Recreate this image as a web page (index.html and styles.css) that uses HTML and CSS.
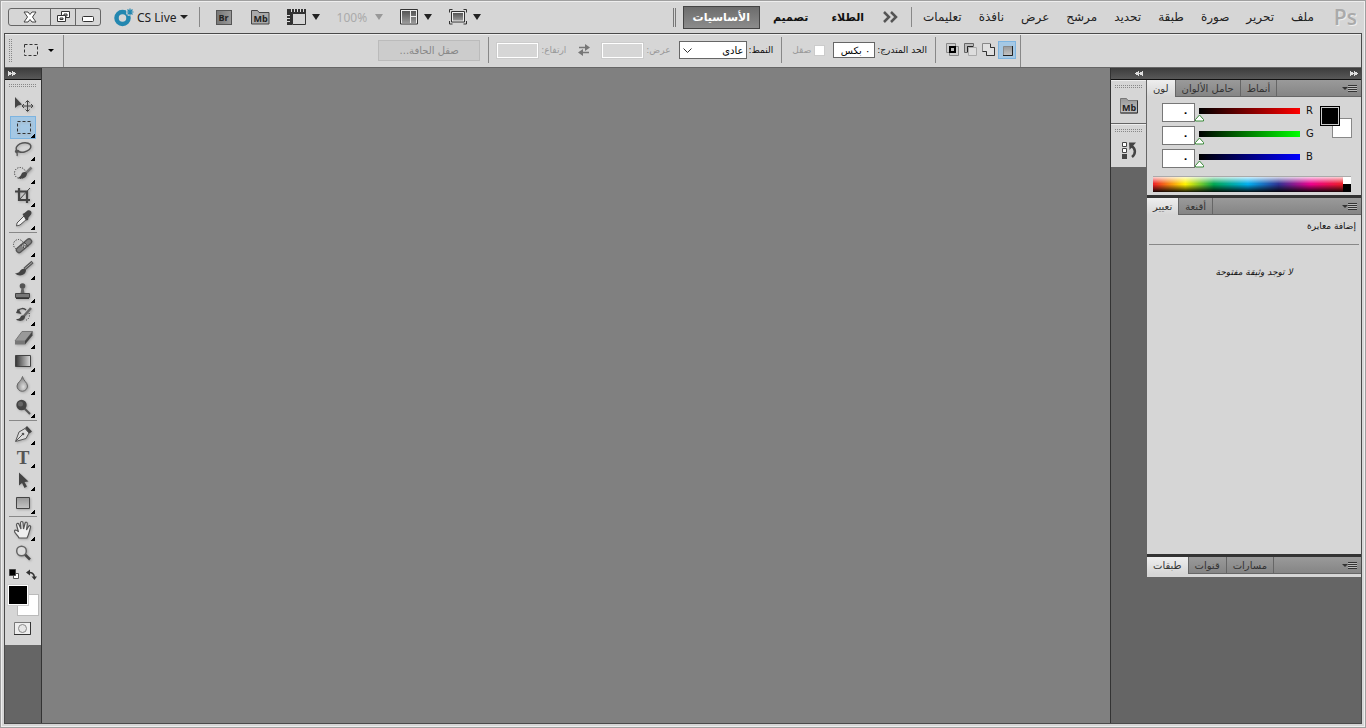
FILE: index.html
```
<!DOCTYPE html>
<html lang="ar">
<head>
    <meta charset="UTF-8" />
    <meta name="viewport" content="width=device-width, initial-scale=1.0" />
    <title>Photoshop</title>
    <link rel="stylesheet" href="styles.css">
</head>
<body>
    <!-- gradients shared by the icons -->
    <svg class="defs" width="0" height="0" aria-hidden="true">
        <defs>
            <linearGradient id="metal" x1="0" y1="0" x2="0" y2="1"><stop offset="0" stop-color="#555" /><stop offset="1" stop-color="#999" /></linearGradient>
            <linearGradient id="silver" x1="0" y1="0" x2="0" y2="1"><stop offset="0" stop-color="#999" /><stop offset="1" stop-color="#c4c4c4" /></linearGradient>
            <linearGradient id="fade" x1="0" y1="0" x2="1" y2="0"><stop offset="0" stop-color="#333" /><stop offset="1" stop-color="#ddd" /></linearGradient>
            <radialGradient id="dropfill" cx="0.6" cy="0.7" r="0.6"><stop offset="0" stop-color="#ddd" /><stop offset="1" stop-color="#888" /></radialGradient>
        </defs>
    </svg>

    <header class="topbar">
        <div class="topleft">
            <div class="winbuttons">
                <button class="close" aria-label="Close"><svg width="14" height="12" viewBox="0 0 14 12"><path d="M1 1h4l2 2.500L9 1h4L9.500 6 13 11H9L7 8.500 5 11H1l3.500-5z" fill="#fff" stroke="#444" /></svg></button>
                <button class="restore" aria-label="Restore"><svg width="13" height="12" viewBox="0 0 13 12"><path d="M4.500.5h8v6h-8z" fill="#fff" stroke="#333" /><path d="M7 3h3v2H7z" fill="#d6d6d6" stroke="#333" /><path d="M.5 4.500h8v6h-8z" fill="#fff" stroke="#333" /><path d="M3 7h3v1.500H3z" fill="#d6d6d6" stroke="#333" /></svg></button>
                <button class="minimize" aria-label="Minimize"><svg width="13" height="12" viewBox="0 0 13 12"><rect x="0.5" y="5.500" width="11" height="5" rx="1" fill="#fff" stroke="#333" /></svg></button>
            </div>
            <button class="cslive">
                <svg width="20" height="19" viewBox="0 0 20 19"><circle cx="8.500" cy="10" r="6" fill="none" stroke="#2387b0" stroke-width="4.500" /><circle cx="16" cy="4" r="4" fill="#d6d6d6" /><path d="M16 .5v7M12.500 4h7M13.500 1.500l5 5M18.500 1.500l-5 5" stroke="#2387b0" stroke-width="1.200" /></svg>
                <span>CS Live</span>
                <i class="caret"></i>
            </button>
            <span class="divider"></span>
            <button class="appbox bridge">Br</button>
            <button class="appbox mini" aria-label="Mini Bridge">
                <svg width="19" height="16" viewBox="0 0 19 16"><path d="M.5 15V1.500h6l1.500 2h10V15z" fill="#aaa" stroke="#444" /><text x="9.500" y="13" text-anchor="middle" class="folder">Mb</text></svg>
            </button>
            <button class="drop film" aria-label="Extras">
                <svg width="19" height="16" viewBox="0 0 19 16"><path d="M0 0h19v5H5v11H0z" fill="#333" /><path d="M5.500 4.500h13v11h-13z" fill="#d6d6d6" stroke="#333" /><path d="M4.500 0v3M7.500 0v3M10.500 0v3M13.500 0v3M16.500 0v3M0 6.500h3M0 9.500h3M0 12.500h3" stroke="#ddd" /></svg>
                <i class="caret"></i>
            </button>
            <button class="drop zoomlevel" disabled><span>100%</span><i class="caret"></i></button>
            <button class="drop" aria-label="Arrange documents">
                <svg width="18" height="16" viewBox="0 0 18 16"><path d="M.5.5h17v14.500H.5z" fill="#eee" stroke="#333" /><path d="M2 2h8v12H2zM11 2h5v5h-5zM11 8h5v6h-5z" fill="url(#metal)" /></svg>
                <i class="caret"></i>
            </button>
            <button class="drop" aria-label="Screen mode">
                <svg width="18" height="16" viewBox="0 0 18 16"><path d="M.5 3.500v-3h3M14.500.5h3v3M17.500 12v3h-3M3.500 15h-3v-3" fill="none" stroke="#333" /><path d="M2.500 2.500h13v10.500h-13z" fill="#eee" stroke="#333" /><path d="M4 4h10v7.500H4z" fill="url(#metal)" /></svg>
                <i class="caret"></i>
            </button>
        </div>

        <div class="topright" dir="rtl">
            <span class="pslogo">Ps</span>
            <nav class="menu">
                <a href="#">ملف</a>
                <a href="#">تحرير</a>
                <a href="#">صورة</a>
                <a href="#">طبقة</a>
                <a href="#">تحديد</a>
                <a href="#">مرشح</a>
                <a href="#">عرض</a>
                <a href="#">نافذة</a>
                <a href="#">تعليمات</a>
            </nav>
            <span class="divider"></span>
            <button class="more" aria-label="More"><svg width="15" height="12" viewBox="0 0 15 12"><path d="M1 1l5 5-5 5M8 1l5 5-5 5" fill="none" stroke="#555" stroke-width="2.500" /></svg></button>
            <button class="space">الطلاء</button>
            <button class="space">تصميم</button>
            <button class="space active">الأساسيات</button>
            <span class="double"></span>
        </div>
    </header>

    <div class="frame">
        <div class="options">
            <div class="optleft">
                <span class="grip-v"></span>
                <button class="current" aria-label="Marquee">
                    <svg width="16" height="14" viewBox="0 0 16 14"><path d="M1.500 1.500h13v11h-13z" fill="none" stroke="#333" stroke-dasharray="3 2" /></svg>
                    <i class="caret small"></i>
                </button>
            </div>
            <div class="optright" dir="rtl">
                <div class="modes">
                    <button class="mode on" aria-label="New"><svg width="18" height="18" viewBox="0 0 18 18"><path d="M5.500 5.500h9v9h-9z" fill="url(#silver)" stroke="#888" /><path d="M5 14.500h9.500V5" fill="none" stroke="#222" /></svg></button>
                    <button class="mode" aria-label="Add"><svg width="18" height="18" viewBox="0 0 18 18"><path d="M2.500 2.500h8v4h4v8h-8v-4h-4z" fill="#e0e0e0" stroke="#888" /><path d="M6.500 14.500h8v-8M2.500 10.500h4v4M10.500 3v3.500h4" fill="none" stroke="#333" /></svg></button>
                    <button class="mode" aria-label="Subtract"><svg width="18" height="18" viewBox="0 0 18 18"><path d="M6.500 6.500h8v8h-8z" fill="#ddd" stroke="#aaa" /><path d="M2.500 2.500h9v3h-6v6h-3z" fill="#bbb" stroke="#666" /><path d="M5.500 11V5.500H11" fill="none" stroke="#222" /></svg></button>
                    <button class="mode" aria-label="Intersect"><svg width="18" height="18" viewBox="0 0 18 18"><path d="M2.500 2.500h9v9h-9zM5.500 5.500h9v9h-9z" fill="#ccc" stroke="#888" /><path d="M6 6h5v5H6z" fill="#bbb" stroke="#000" stroke-width="2" /></svg></button>
                </div>
                <div class="group">
                    <label for="feather">الحد المتدرج:</label>
                    <input class="px" id="feather" type="text" value="٠ بكس" />
                </div>
                <div class="check">
                    <input type="checkbox" id="smooth" disabled />
                    <label for="smooth">صقل</label>
                </div>
                <div class="group">
                    <label for="style">النمط:</label>
                    <select id="style"><option>عادي</option></select>
                </div>
                <div class="size">
                    <label for="w">عرض:</label>
                    <input id="w" type="text" disabled />
                    <svg class="swap" width="14" height="12" viewBox="0 0 14 12"><path d="M2 3.500h8M4 8.500h8" stroke="#777" stroke-width="1.500" /><path d="M8 0l5 3.500L8 7zM6 5L1 8.500 6 12z" fill="#777" /></svg>
                    <label for="h">ارتفاع:</label>
                    <input id="h" type="text" disabled />
                </div>
                <button class="refine" disabled>صقل الحافة...</button>
            </div>
        </div>

        <main class="workspace">
            <aside class="toolcol">
                <div class="dockhead"><i class="ff"></i></div>
                <div class="tools">
                    <span class="grip-h"></span>
                    <div class="toolset">
                        <button class="tool single" aria-label="Move"><svg viewBox="0 0 26 23"><path d="M5 4v11l3-2.500 4-1z" fill="#444" /><path d="M17.500 8v10M12.500 13h10" stroke="#444" /><path d="M15.500 9.500l2-2 2 2M15.500 16.500l2 2 2-2M14 11l-2 2 2 2M21 11l2 2-2 2" fill="none" stroke="#444" /></svg></button>
                        <button class="tool on" aria-label="Marquee"><svg viewBox="0 0 26 23"><path d="M7.500 5.500h13v12h-13z" fill="none" stroke="#333" stroke-dasharray="3 2" /></svg></button>
                        <button class="tool" aria-label="Lasso"><svg viewBox="0 0 26 23"><ellipse cx="13.500" cy="8.500" rx="7.500" ry="4.500" transform="rotate(-12 13.500 8.500)" fill="none" stroke="#555" stroke-width="1.500" /><path d="M7 11c-3 1-1 3 1 2s0-2-1-1 1 3 0 5" fill="none" stroke="#555" stroke-width="1.300" /></svg></button>
                        <button class="tool" aria-label="Quick selection"><svg viewBox="0 0 26 23"><circle cx="10" cy="11" r="5.500" fill="none" stroke="#222" stroke-dasharray="1 1.500" /><path d="M21.500 5.500l-7 7" stroke="#777" stroke-width="2.500" /><path d="M17 11c-2-2-5-1-5.500 1S9 15 8 16c4 1.500 9 0 9-5z" fill="#444" /></svg></button>
                        <button class="tool" aria-label="Crop"><svg viewBox="0 0 26 23"><path d="M9 3v12h11M5 6.500h12V18" fill="none" stroke="#444" stroke-width="2.200" /><path d="M20 3L9.500 14.500" stroke="#444" /></svg></button>
                        <button class="tool" aria-label="Eyedropper"><svg viewBox="0 0 26 23"><path d="M14 8l3 3-7 6-3.500 1 .5-3z" fill="#eee" stroke="#555" /><path d="M12.500 6l2-1 3-2.500c3-1 5 1.500 3.500 4l-2.500 3-.500 2.500-2 .5z" fill="#444" /></svg></button>
                    </div>
                    <hr />
                    <div class="toolset">
                        <button class="tool" aria-label="Healing"><svg viewBox="0 0 26 23"><circle cx="8.500" cy="9.500" r="5" fill="none" stroke="#222" stroke-dasharray="1 1.500" /><path d="M9 15L19 6.500" stroke="#555" stroke-width="6.500" stroke-linecap="round" /><path d="M9 15L19 6.500" stroke="#808080" stroke-width="4" stroke-linecap="round" /><path d="M11 9.500l4 4.500M14 7l4 4.500" stroke="#444" /><path d="M12 11h1M14 12h1M14.500 9.500h1" stroke="#eee" /></svg></button>
                        <button class="tool" aria-label="Brush"><svg viewBox="0 0 26 23"><path d="M22.500 4l-8 7" stroke="#555" stroke-width="3" /><path d="M22 4.500l-7 6" stroke="#aaa" /><path d="M16 12c-2-2.500-5-1-6 1s-3 2-5 2.500c4 3.500 11 2 11-3.500z" fill="#444" /></svg></button>
                        <button class="tool" aria-label="Stamp"><svg viewBox="0 0 26 23"><circle cx="12.500" cy="5" r="2.800" fill="#555" /><path d="M11.500 7h2l1 5.500h-4z" fill="#666" /><path d="M5.500 12.500h14v4h-14z" fill="#777" stroke="#444" /><path d="M6 17.500h13" stroke="#333" /></svg></button>
                        <button class="tool" aria-label="History brush"><svg viewBox="0 0 26 23"><path d="M8 7c2-3 6-3 8-1" fill="none" stroke="#444" stroke-width="1.500" /><path d="M6 9l5.500 1L8 4.500z" fill="#444" /><path d="M21 4l-7 8" stroke="#666" stroke-width="2.500" /><path d="M15 12c-2-1.500-4-.5-4.500 1S8 15 6 15.500c4 3 9.500 1 9-3.500z" fill="#444" /><path d="M19 9c1.500 4-1 7-4 7.500" fill="none" stroke="#333" stroke-dasharray="1 1.500" /></svg></button>
                        <button class="tool" aria-label="Eraser"><svg viewBox="0 0 26 23"><path d="M12 4.500h10.500L15 14H5z" fill="#999" stroke="#777" /><path d="M5 14h10v3.500H5z" fill="#777" /><path d="M15 14l7.500-9.500v4L15 17.500z" fill="#444" /></svg></button>
                        <button class="tool" aria-label="Gradient"><svg viewBox="0 0 26 23"><path d="M5.500 5.500h15v11h-15z" fill="url(#fade)" stroke="#444" /></svg></button>
                        <button class="tool" aria-label="Blur"><svg viewBox="0 0 26 23"><path d="M12.500 3.500c.5 4 5 6 5 9.500a5 5 0 0 1-10.500 0c0-3.500 5-5.500 5.500-9.500z" fill="url(#dropfill)" stroke="#666" /></svg></button>
                        <button class="tool" aria-label="Dodge"><svg viewBox="0 0 26 23"><path d="M14 12l6 6" stroke="#555" stroke-width="2" /><circle cx="11.500" cy="9" r="5.200" fill="#444" /><circle cx="10.500" cy="8" r="2.500" fill="#666" /></svg></button>
                    </div>
                    <hr />
                    <div class="toolset">
                        <button class="tool" aria-label="Pen"><svg viewBox="0 0 26 23"><path d="M5.500 18.500L9 9l6-3.500 4 4.500-3 5.500z" fill="#ddd" stroke="#555" /><path d="M6 18l7-7" stroke="#555" /><circle cx="13" cy="11" r="1.300" fill="#555" /><path d="M15 5l2-2 5 5.500-2.500 2z" fill="#444" /></svg></button>
                        <button class="tool" aria-label="Type"><span class="letter">T</span></button>
                        <button class="tool" aria-label="Path selection"><svg viewBox="0 0 26 23"><path d="M9 3.500v13l3-2.500 2.500 5 2.500-1.500-2.500-4.500 4-.5z" fill="#444" /></svg></button>
                        <button class="tool" aria-label="Rectangle"><svg viewBox="0 0 26 23"><path d="M6.500 5.500h13v11h-13z" fill="url(#silver)" stroke="#444" /></svg></button>
                    </div>
                    <hr />
                    <div class="toolset">
                        <button class="tool" aria-label="Hand"><svg viewBox="0 0 26 23"><path d="M9 19c-1-3-5-5-4.500-7s3-.5 4 1L6.500 6c0-2 2-2 2.500-.5L11 10l-.5-6c0-2 2.500-2 2.500 0l.5 6L15 4.500c.5-2 2.500-1.500 2.300.5L16.500 11l2-3.500c1-1.500 2.700-.5 2 1-1 3-1.500 7-3.500 10.500z" fill="#eee" stroke="#555" stroke-width="1.200" /></svg></button>
                        <button class="tool single" aria-label="Zoom"><svg viewBox="0 0 26 23"><path d="M14.500 12l5.500 5.500" stroke="#444" stroke-width="2.500" /><circle cx="11.500" cy="9" r="4.800" fill="#ddd" stroke="#666" stroke-width="1.500" /></svg></button>
                    </div>
                    <div class="minis">
                        <button aria-label="Default colors"><svg width="11" height="11" viewBox="0 0 11 11"><path d="M4.500 4.500h5v5h-5z" fill="#fff" stroke="#555" /><path d="M.5.5h6v6h-6z" stroke="#444" /></svg></button>
                        <button aria-label="Swap colors"><svg width="11" height="11" viewBox="0 0 11 11"><path d="M2 3.500c4-.5 6 1 6.500 5" fill="none" stroke="#333" stroke-width="1.500" /><path d="M0 3.500L4 .5v6zM5.500 7.500H11l-2.500 3.500z" fill="#333" /></svg></button>
                    </div>
                    <div class="swatches">
                        <button class="back" aria-label="Background"></button>
                        <button class="fore" aria-label="Foreground"></button>
                    </div>
                    <button class="quickmask" aria-label="Quick mask"><svg width="17" height="13" viewBox="0 0 17 13"><path d="M.5.5h16v12H.5z" fill="#eee" stroke="#777" /><path d="M0 12.500h16.500V0" fill="none" stroke="#333" /><circle cx="8.500" cy="6.500" r="4" fill="#e6e6e6" stroke="#888" /></svg></button>
                </div>
            </aside>

            <section class="canvas"></section>

            <aside class="dock">
                <div class="dockhead"><i class="ff back"></i><i class="ff"></i></div>
                <div class="dockbody">
                    <div class="strip">
                        <div class="iconpanel">
                            <span class="grip-h"></span>
                            <button aria-label="Mini Bridge"><svg width="18" height="17" viewBox="0 0 18 17"><path d="M.5 16V1.500h6l1.500 2h9.500V16z" fill="url(#silver)" stroke="#777" /><path d="M.5 16h17V3.500" fill="none" stroke="#333" /><text x="9" y="14" text-anchor="middle" class="folder">Mb</text></svg></button>
                        </div>
                        <div class="iconpanel">
                            <span class="grip-h"></span>
                            <button aria-label="History"><svg width="18" height="18" viewBox="0 0 18 18"><path d="M2.500 1.500h4v4h-4zM2.500 7.500h4v4h-4z" fill="#fff" stroke="#444" /><path d="M2 13h5v5H2z" fill="#444" /><path d="M11 5c5 2 5 8 1 11" fill="none" stroke="#444" stroke-width="2.500" /><path d="M9 1.500h7L9.500 9z" fill="#444" /></svg></button>
                        </div>
                    </div>

                    <div class="panels">
                        <section class="panel">
                            <div class="tabs">
                                <button class="tab active">لون</button>
                                <button class="tab">حامل الألوان</button>
                                <button class="tab">أنماط</button>
                                <button class="panelmenu" aria-label="Panel menu"><i></i></button>
                            </div>
                            <div class="color">
                                <div class="channels">
                                    <div class="channel">
                                        <input class="num" type="text" value="٠" aria-label="R" />
                                        <input class="range red" id="r" type="range" min="0" max="255" value="0" />
                                        <label for="r">R</label>
                                    </div>
                                    <div class="channel">
                                        <input class="num" type="text" value="٠" aria-label="G" />
                                        <input class="range green" id="g" type="range" min="0" max="255" value="0" />
                                        <label for="g">G</label>
                                    </div>
                                    <div class="channel">
                                        <input class="num" type="text" value="٠" aria-label="B" />
                                        <input class="range blue" id="b" type="range" min="0" max="255" value="0" />
                                        <label for="b">B</label>
                                    </div>
                                    <div class="swatches">
                                        <button class="back" aria-label="Background"></button>
                                        <button class="fore" aria-label="Foreground"></button>
                                    </div>
                                </div>
                                <div class="spectrum"><span class="hues"></span><span class="bw"></span></div>
                            </div>
                        </section>

                        <section class="panel">
                            <div class="tabs">
                                <button class="tab active">تعيير</button>
                                <button class="tab">أقنعة</button>
                                <button class="panelmenu" aria-label="Panel menu"><i></i></button>
                            </div>
                            <div class="adjust" dir="rtl">
                                <p class="title">إضافة معايرة</p>
                                <p class="empty">لا توجد وثيقة مفتوحة</p>
                            </div>
                        </section>

                        <section class="panel">
                            <div class="tabs">
                                <button class="tab active">طبقات</button>
                                <button class="tab">قنوات</button>
                                <button class="tab">مسارات</button>
                                <button class="panelmenu" aria-label="Panel menu"><i></i></button>
                            </div>
                            <div class="foot"></div>
                        </section>
                    </div>
                </div>
            </aside>
        </main>
    </div>
</body>
</html>
```
FILE: styles.css
```
* {
    margin: 0;
    padding: 0;
    box-sizing: border-box;
}
body {
    height: 100vh;
    display: flex;
    flex-direction: column;
    padding: 0 3px 3px;
    border: 1px solid #a0a0a0;
    background-color: #d6d6d6;
    box-shadow: inset 0 0 0 1px #eee;
    font-family: "DejaVu Sans", sans-serif;
    font-size: 10px;
    color: #111;
    overflow: hidden;
}
button {
    background: none;
    border: none;
    font: inherit;
    color: inherit;
}
svg {
    display: block;
}
.defs {
    position: absolute;
}
.divider {
    width: 1px;
    height: 20px;
    background-color: #888;
}
.caret {
    border: 4px solid transparent;
    border-top: 6px solid #222;
    border-bottom: none;
}
.caret.small {
    border-width: 3px;
    border-top-width: 3px;
    border-top-color: #000;
}

/* top bar */
.topbar {
    height: 32px;
    flex: none;
    display: flex;
    justify-content: space-between;
    align-items: center;
    padding: 0 5px 0 4px;
}
.topleft, .topright {
    display: flex;
    align-items: center;
}
.winbuttons {
    display: flex;
    height: 18px;
    border: 1px solid #666;
    border-radius: 3px;
}
.winbuttons button {
    width: 25px;
    display: flex;
    align-items: center;
    justify-content: center;
    border-left: 1px solid #666;
}
.winbuttons .close {
    width: 41px;
    border-left: none;
}
.cslive {
    display: flex;
    align-items: center;
    gap: 3px;
    margin: 0 11px 0 13px;
    font-family: "Noto Sans", sans-serif;
    font-size: 12px;
    color: #222;
}
.cslive .caret {
    border-top-width: 4px;
}
.appbox {
    margin-left: 19px;
}
.bridge {
    width: 16px;
    height: 15px;
    margin-left: 16px;
    background: linear-gradient(90deg, #777, #999);
    border: 1px solid #555;
    font: bold 9px/13px "Open Sans", sans-serif;
    color: #222;
}
.folder {
    font: bold 9px "Open Sans", sans-serif;
    fill: #222;
}
.drop {
    display: flex;
    align-items: center;
    gap: 6px;
    margin-left: 17px;
}
.zoomlevel {
    gap: 8px;
    font-family: "Noto Sans", sans-serif;
    font-size: 12px;
    color: #aaa;
}
.zoomlevel .caret {
    border-top-color: #999;
}
.pslogo {
    margin-left: 20px;
    font: 600 21px/22px "Open Sans", sans-serif;
    color: #aaa;
    text-shadow: 1px 1px #eee;
}
.menu {
    display: flex;
    gap: 17px;
    margin-left: 11px;
    font-size: 12px;
}
.menu a {
    color: #222;
    text-decoration: none;
}
.more {
    margin: 0 13px 0 9px;
}
.space {
    height: 23px;
    padding: 0 9px;
    margin-left: 3px;
    border: 1px solid transparent;
    font-size: 11px;
    font-weight: bold;
}
.space.active {
    margin-left: 7px;
    background: linear-gradient(#6c6c6c, #8c8c8c);
    border-color: #444;
    color: #fff;
}
.double {
    width: 3px;
    height: 19px;
    border: solid #777;
    border-width: 0 1px;
}

/* options bar */
.frame {
    flex: 1;
    min-height: 0;
    display: flex;
    flex-direction: column;
    border: 1px solid #4a4a4a;
}
.options {
    height: 34px;
    flex: none;
    display: flex;
    justify-content: space-between;
    border-top: 1px solid #eee;
    border-bottom: 1px solid #666;
}
.optleft {
    display: flex;
    align-items: center;
    padding-left: 4px;
    border-right: 1px solid #888;
}
.grip-v {
    width: 3px;
    height: 24px;
}
.grip-h {
    display: block;
    height: 3px;
    margin: 0 4px;
}
.grip-v, .grip-h {
    background:
        repeating-linear-gradient(90deg, transparent 0 1px, #d6d6d6 1px 2px),
        repeating-linear-gradient(#888 0 1px, #d6d6d6 1px 2px);
}
.current {
    display: flex;
    align-items: center;
    gap: 9px;
    padding: 0 9px 2px 11px;
}
.optright {
    display: flex;
    align-items: center;
    margin-right: 340px;
    padding-bottom: 2px;
    border-right: 1px solid #888;
}
.modes {
    display: flex;
    padding: 0 4px 0 8px;
}
.mode.on {
    background-color: #a5c8e4;
    box-shadow: inset 0 0 0 1px #7db4e0;
}
.group, .check, .size, .modes {
    height: 26px;
    display: flex;
    align-items: center;
}
.check, .size, .modes {
    border-left: 1px solid #888;
}
.optright label {
    font-size: 9px;
}
.group {
    gap: 2px;
    padding: 0 8px;
}
.group input, .group select {
    height: 16px;
    border: 1px solid #666;
    background-color: #fff;
    font: inherit;
}
.px {
    width: 42px;
    padding: 0 4px;
}
.check {
    gap: 3px;
    padding-left: 10px;
    color: #999;
}
.check input {
    appearance: none;
    width: 11px;
    height: 11px;
    background-color: #fff;
    border: 1px solid #ccc;
}
.group select {
    appearance: none;
    width: 68px;
    height: 18px;
    padding: 0 2px;
    background: #fff url("data:image/svg+xml,%3Csvg xmlns='http://www.w3.org/2000/svg' width='9' height='6'%3E%3Cpath d='M.5.5l4 4 4-4' fill='none' stroke='%23333'/%3E%3C/svg%3E") no-repeat 3px 6px;
}
.size {
    gap: 3px;
    padding-left: 8px;
    color: #999;
}
.size input {
    width: 41px;
    height: 15px;
    background-color: transparent;
    border: 1px solid #fff;
    outline: 1px solid #ccc;
}
.swap {
    margin: 0 8px;
}
.refine {
    width: 102px;
    height: 21px;
    margin-right: 8px;
    border: 1px solid #bbb;
    background-color: #ccc;
    color: #888;
}

/* workspace */
.workspace {
    flex: 1;
    min-height: 0;
    display: flex;
    background-color: #656565;
}
.toolcol {
    width: 37px;
    border-right: 1px solid #333;
}
.dockhead {
    height: 12px;
    display: flex;
    align-items: center;
    justify-content: space-between;
    padding: 0 3px;
    background: linear-gradient(#3c3c3c, #585858);
    border-bottom: 1px solid #111;
}
.ff {
    width: 8px;
    height: 5px;
    background: conic-gradient(from 236deg at 100% 50%, #ddd 68deg, transparent 0) 0 0 / 4px 5px;
}
.ff.back {
    margin-left: 21px;
    transform: scaleX(-1);
}
.tools {
    padding: 4px 0 10px;
    background-color: #d6d6d6;
}
.toolset {
    display: flex;
    flex-direction: column;
    padding-left: 5px;
}
.grip-h + .toolset {
    margin-top: 6px;
}
.tool {
    position: relative;
    width: 26px;
    height: 23px;
}
.tool svg {
    width: 26px;
    height: 23px;
    filter: drop-shadow(1px 1px 1px #aaa);
}
.tool::after {
    content: "";
    position: absolute;
    right: 1px;
    bottom: 1px;
    width: 4px;
    height: 4px;
    background: linear-gradient(135deg, transparent 45%, #000 45%);
}
.tool.single::after {
    display: none;
}
.tool.on {
    background-color: #a5c8e4;
    box-shadow: inset 0 0 0 1px #7db4e0;
}
.letter {
    font: bold 19px/23px "Liberation Serif", serif;
    color: #555;
}
.tools hr {
    height: 2px;
    margin: 1px 4px;
    border: solid #888;
    border-width: 1px 0 0;
}
.minis {
    display: flex;
    justify-content: space-between;
    padding: 4px 4px 5px;
}
.swatches {
    position: relative;
    width: 31px;
    height: 31px;
    margin-left: 3px;
}
.swatches button {
    position: absolute;
    width: 20px;
    height: 20px;
    border: 1px solid #fff;
    outline: 1px solid #bbb;
    outline-offset: -1px;
}
.swatches .fore {
    top: 0;
    left: 0;
    background-color: #000;
    outline: none;
    box-shadow: 0 0 0 1px #ccc;
}
.swatches .back {
    right: 0;
    bottom: 0;
    background-color: #fff;
}
.tools .swatches .back {
    width: 22px;
    height: 22px;
}
.quickmask {
    display: block;
    margin: 6px auto 0 9px;
}
.canvas {
    flex: 1;
    background-color: #808080;
}

/* right dock */
.dock {
    width: 251px;
    display: flex;
    flex-direction: column;
    border-left: 1px solid #333;
}
.dockbody {
    flex: 1;
    display: flex;
    gap: 1px;
}
.strip {
    width: 35px;
}
.iconpanel {
    height: 43px;
    padding-top: 4px;
    margin-bottom: 1px;
    background-color: #d6d6d6;
    border-top: 1px solid #eee;
}
.iconpanel button {
    display: block;
    margin: 9px auto 0;
}
.panels {
    flex: 1;
    min-width: 0;
}
.panel {
    margin-bottom: 3px;
    background-color: #d6d6d6;
    box-shadow: 0 3px #333;
}
.panel:last-child {
    box-shadow: none;
}
.tabs {
    height: 17px;
    display: flex;
    background: linear-gradient(#9a9a9a, #858585);
    border-bottom: 1px solid #666;
}
.tab {
    padding: 0 6px;
    border-right: 1px solid #666;
    line-height: 15px;
    color: #333;
}
.tab.active {
    height: 17px;
    background: linear-gradient(#eee, #d6d6d6);
}
.panelmenu {
    width: 15px;
    margin: 5px 4px 0 auto;
    display: flex;
    align-items: flex-start;
}
.panelmenu::before {
    content: "";
    margin-top: 2px;
    border: 3px solid transparent;
    border-top-color: #333;
    border-bottom: none;
}
.panelmenu i {
    width: 9px;
    height: 7px;
    background: repeating-linear-gradient(#333 0 1px, #bbb 1px 2px);
}
.color {
    padding: 6px 9px 3px 6px;
}
.channels {
    position: relative;
    padding-left: 9px;
}
.channel {
    height: 23px;
    display: flex;
    align-items: flex-start;
}
.channel label {
    margin-left: 3px;
    font: 10px/15px "DejaVu Sans", sans-serif;
}
.num {
    width: 33px;
    height: 19px;
    padding-left: 14px;
    border: 1px solid #777;
    background-color: #fff;
    font: inherit;
    font-weight: bold;
    text-align: center;
}
.range {
    appearance: none;
    width: 108px;
    height: 14px;
    margin-top: 5px;
    background-color: transparent;
    background-repeat: no-repeat;
    background-position: 4px 0;
    background-size: 101px 6px;
}
.range.red {
    background-image: linear-gradient(90deg, #000, #f00);
}
.range.green {
    background-image: linear-gradient(90deg, #000, #0f0);
}
.range.blue {
    background-image: linear-gradient(90deg, #000, #00f);
}
.range::-webkit-slider-thumb {
    appearance: none;
    width: 9px;
    height: 8px;
    margin-top: 6px;
    background: url("data:image/svg+xml,%3Csvg xmlns='http://www.w3.org/2000/svg' width='9' height='8'%3E%3Cpath d='M4.500 1l4 4.500v1.500h-8V5.500z' fill='%23fff' stroke='%23398a39'/%3E%3C/svg%3E") no-repeat;
}
.channels .swatches {
    position: absolute;
    top: 3px;
    right: 0;
    width: 32px;
    height: 32px;
}
.channels .fore {
    border: 1px solid #000;
    box-shadow: inset 0 0 0 1px #ccc;
}
.channels .back {
    outline-color: #888;
}
.spectrum {
    display: flex;
    height: 16px;
    margin: 4px 1px 0 0;
    border-top: 1px solid #aaa;
}
.hues {
    flex: 1;
    background:
        linear-gradient(rgba(255, 255, 255, 0.8), rgba(255, 255, 255, 0) 45%, rgba(0, 0, 0, 0) 50%, rgba(0, 0, 0, 0.9)),
        linear-gradient(90deg, #ed1c24, #fff200 17%, #00a651 32%, #00aeef 50%, #2e3192 66%, #ec008c 83%, #ed1c24);
}
.bw {
    width: 8px;
    background: linear-gradient(#fff 50%, #000 50%);
}
.adjust {
    height: 339px;
    font-size: 9px;
}
.title {
    height: 30px;
    margin: 0 2px;
    padding: 6px 3px 0;
    border-bottom: 1px solid #888;
}
.empty {
    padding-top: 22px;
    text-align: center;
    font-style: italic;
}
.foot {
    height: 3px;
}
```
